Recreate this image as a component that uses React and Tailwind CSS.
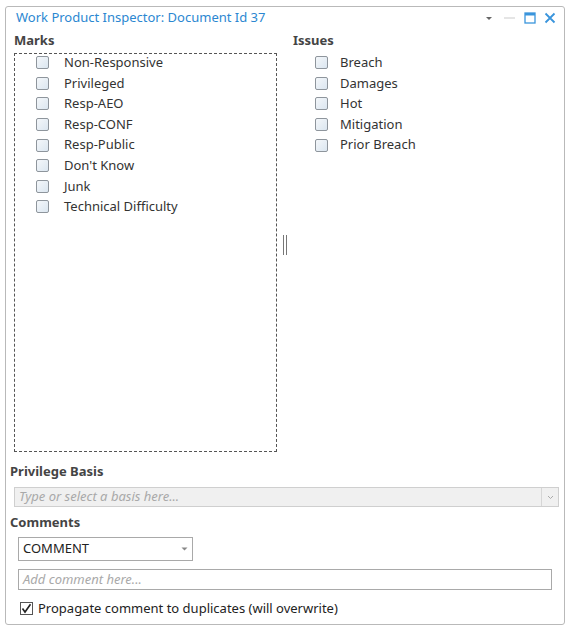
const marks = ['Non-Responsive', 'Privileged', 'Resp-AEO', 'Resp-CONF', 'Resp-Public', "Don't Know", 'Junk', 'Technical Difficulty']
const issues = ['Breach', 'Damages', 'Hot', 'Mitigation', 'Prior Breach']

function Box() {
  return (
    <span className="w-[13px] h-[13px] border border-[#8e959c] rounded-[2px] bg-gradient-to-br from-[#f4f7fa] to-[#dbe6f0] shrink-0" />
  )
}

function CheckRow({ label, gap }) {
  return (
    <div className="flex items-center h-[20.6px]">
      <Box />
      <span className={gap}>{label}</span>
    </div>
  )
}

export default function App() {
  return (
    <div className="w-[567px] h-[631px] bg-white text-[13px] text-[#333] pt-[6px] pl-[5px]" style={{ fontFamily: '"Noto Sans", "Open Sans", sans-serif' }}>
      <div className="w-[560px] h-[619px] border border-[#b9b9b9] rounded-[3px] flex flex-col">
        {/* title bar */}
        <div className="h-[22px] flex items-center pl-[10px] pr-[8px]">
          <span className="text-[#2b87d1]">Work Product Inspector: Document Id 37</span>
          <div className="ml-auto flex items-center gap-[7px]">
            <svg width="14" height="12" viewBox="0 0 14 12"><path d="M4 5 L10 5 L7 8 Z" fill="#666" /></svg>
            <svg width="14" height="12" viewBox="0 0 14 12"><path d="M1 6 H12" stroke="#dcdcdc" strokeWidth="1.5" /></svg>
            <svg width="13" height="12" viewBox="0 0 13 12"><rect x="1" y="1" width="10" height="10" fill="none" stroke="#3a95dc" strokeWidth="1.3" /><rect x="1" y="1" width="10" height="2.5" fill="#3a95dc" /></svg>
            <svg width="12" height="12" viewBox="0 0 12 12"><path d="M1.5 1.5 L10.5 10.5 M10.5 1.5 L1.5 10.5" stroke="#3a95dc" strokeWidth="1.8" /></svg>
          </div>
        </div>

        <div className="flex pl-[8px]">
          <div className="w-[263px]">
            <div className="font-bold text-[#444] h-[24px] flex items-center">Marks</div>
            <div className="h-[399px] border border-dashed border-[#555] pl-[21px]">
              <div className="-mt-[1.5px]">
                {marks.map(m => <CheckRow key={m} label={m} gap="ml-[15px]" />)}
              </div>
            </div>
          </div>
          <div className="w-[16px] flex items-center justify-center">
            <span className="w-[4px] h-[20px] border-l border-r border-[#777] mt-[8px]" />
          </div>
          <div className="flex-1">
            <div className="font-bold text-[#444] h-[24px] flex items-center">Issues</div>
            <div className="pl-[22px] -mt-[0.5px]">
              {issues.map(m => <CheckRow key={m} label={m} gap="ml-[12px]" />)}
            </div>
          </div>
        </div>

        <div className="pl-[4px] pr-[5px] mt-[10px]">
          <div className="font-bold text-[#444] h-[20px] flex items-center">Privilege Basis</div>
          <div className="ml-[4px] mt-[5px] h-[20px] border border-[#cfcfcf] bg-[#f0f0f0] flex items-center">
            <span className="italic text-[#a9a9a9] pl-[4px]">Type or select a basis here...</span>
            <span className="ml-auto w-[17px] h-full border-l border-[#d6d6d6] flex items-center justify-center">
              <svg width="7" height="5" viewBox="0 0 7 5"><path d="M1 1 L3.5 3.5 L6 1" stroke="#aaa" fill="none" /></svg>
            </span>
          </div>
          <div className="font-bold text-[#444] h-[20px] flex items-center mt-[6px]">Comments</div>
          <div className="pl-[8px] pr-[7px]">
            <div className="mt-[4px] w-[175px] h-[24px] border border-[#a9a9a9] flex items-center pl-[4px] text-[#222]">
              COMMENT
              <svg className="ml-auto mr-[4px]" width="7" height="4" viewBox="0 0 7 4"><path d="M0.5 0.5 H6.5 L3.5 3.5 Z" fill="#888" /></svg>
            </div>
            <div className="mt-[8px] h-[21px] border border-[#a9a9a9] flex items-center pl-[4px]">
              <span className="italic text-[#a9a9a9]">Add comment here...</span>
            </div>
            <div className="mt-[9px] flex items-center pl-[2px]">
              <span className="w-[13px] h-[13px] border border-[#555] bg-white flex items-center justify-center">
                <svg width="11" height="11" viewBox="0 0 11 11"><path d="M1.5 5.5 L4 9 L9.5 1.2" stroke="#222" strokeWidth="1.6" fill="none" /></svg>
              </span>
              <span className="ml-[5px] text-[#222]">Propagate comment to duplicates (will overwrite)</span>
            </div>
          </div>
        </div>
      </div>
    </div>
  )
}
